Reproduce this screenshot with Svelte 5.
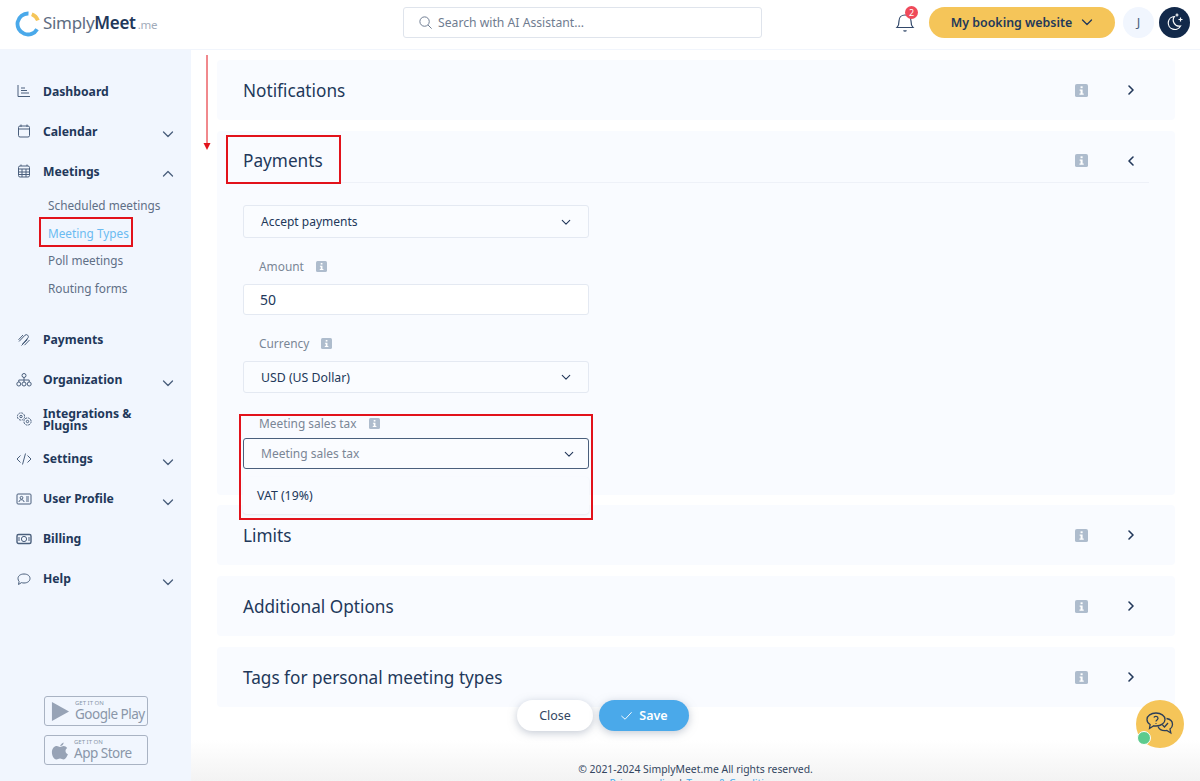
<script>
	const menuTop = [
		{ name: 'Dashboard', icon: 'dash' },
		{ name: 'Calendar', icon: 'cal', arrow: 'down' },
		{ name: 'Meetings', icon: 'grid', arrow: 'up' }
	]
	const subItems = ['Scheduled meetings', 'Meeting Types', 'Poll meetings', 'Routing forms']
	const menuBottom = [
		{ name: 'Payments', icon: 'pay' },
		{ name: 'Organization', icon: 'org', arrow: 'down' },
		{ name: 'Integrations & Plugins', icon: 'gears', tall: true },
		{ name: 'Settings', icon: 'code', arrow: 'down' },
		{ name: 'User Profile', icon: 'user', arrow: 'down' },
		{ name: 'Billing', icon: 'bill' },
		{ name: 'Help', icon: 'help', arrow: 'down' }
	]
	const lowerPanels = ['Limits', 'Additional Options', 'Tags for personal meeting types']
</script>

{#snippet menuIcon(kind)}
	<svg class="micon" viewBox="0 0 16 16" width="16" height="16" fill="none" stroke="#4a5f7c" stroke-width="1">
		{#if kind === 'dash'}
			<path d="M2 2v11.500h12M5 5h4M5 7.500h6M5 10h8" />
		{:else if kind === 'cal'}
			<rect x="2.500" y="3" width="11" height="11" rx="1.500" /><path d="M5 1.500V4M11 1.500V4M2.500 6h11" />
		{:else if kind === 'grid'}
			<rect x="2.500" y="3" width="11" height="11" rx="1.500" /><path d="M5 1.500V3M11 1.500V3M2.500 6h11M2.500 9h11M2.500 11.500h11M6 6v8M10 6v8" />
		{:else if kind === 'pay'}
			<path d="M3 9.500 9 3.200a2 2 0 0 1 3 2.600L6.500 12M5.500 13.500 11.500 7.500M7 3 2.500 7.800M13.500 8 8.500 13.200" />
		{:else if kind === 'org'}
			<circle cx="8" cy="3.500" r="2" /><circle cx="2.800" cy="12" r="2" /><circle cx="8" cy="12" r="2" /><circle cx="13.200" cy="12" r="2" /><path d="M8 5.500V10M2.800 10V8h10.400v2" />
		{:else if kind === 'gears'}
			<circle cx="5" cy="5.500" r="3.600" stroke-dasharray="2 .8" /><circle cx="5" cy="5.500" r="1.200" /><circle cx="11.500" cy="10.500" r="3.600" stroke-dasharray="2 .8" /><circle cx="11.500" cy="10.500" r="1.200" />
		{:else if kind === 'code'}
			<path d="M4.500 4.500 1 8l3.500 3.500M11.500 4.500 15 8l-3.500 3.500M9.500 2.500l-3 11" />
		{:else if kind === 'user'}
			<rect x="1" y="3" width="14" height="10" rx="1" /><circle cx="5.500" cy="6.800" r="1.400" /><path d="M3 11c0-3 5-3 5 0M10 6h3M10 8h3M10 10h3" />
		{:else if kind === 'bill'}
			<rect x="1" y="3.500" width="14" height="9" rx="1.500" stroke-width="1.400" /><circle cx="8" cy="8" r="2.600" /><path d="M3 6v4M13 6v4" />
		{:else if kind === 'help'}
			<path d="M8 3c3.600 0 6 1.900 6 4.500S11.600 12 8 12c-.9 0-1.700-.1-2.500-.4L2.500 13.500l.6-3C2.400 9.700 2 8.700 2 7.500 2 4.900 4.400 3 8 3z" />
		{/if}
	</svg>
{/snippet}

{#snippet chevron(dir, cls = '')}
	<svg class="chev {cls}" viewBox="0 0 12 12" width="12" height="12" fill="none" stroke="currentColor" stroke-width="1.300" stroke-linecap="round" stroke-linejoin="round">
		{#if dir === 'down'}
			<path d="M1.500 4 6 8.500 10.500 4" />
		{:else if dir === 'up'}
			<path d="M1.500 8 6 3.500 10.500 8" />
		{:else if dir === 'right'}
			<path d="M4 2l4 4-4 4" stroke-width="1.600" />
		{:else}
			<path d="M8 2 4 6l4 4" stroke-width="1.600" />
		{/if}
	</svg>
{/snippet}

{#snippet infoIcon(size = 13)}
	<svg class="info" viewBox="0 0 14 14" width={size} height={size}>
		<rect width="14" height="14" rx="2" fill="#aebccd" />
		<rect x="6" y="2.500" width="2.200" height="2" fill="#fff" />
		<path d="M5 6h3.200v4.200H9.400v1.300H4.800v-1.300H6V7.300H5z" fill="#fff" />
	</svg>
{/snippet}

<div class="page">
	<header class="topbar">
		<div class="logo">
			<svg viewBox="0 0 26 26" width="26" height="26" fill="none" stroke-width="3.800">
				<path d="M22.100 18.200A10.500 10.500 0 1 1 13.500 2.500" stroke="#4aa9ea" />
				<path d="M16.800 3.200a10.500 10.500 0 0 1 6.100 6.200" stroke="#f5c559" />
			</svg>
			<span class="logotext">Simply<b>Meet</b><small>.me</small></span>
		</div>
		<div class="search">
			<svg viewBox="0 0 16 16" width="15" height="15" fill="none" stroke="#66758c" stroke-width="1">
				<circle cx="7" cy="7" r="5" /><path d="M10.700 10.700 14.500 14.500" />
			</svg>
			<span>Search with AI Assistant...</span>
		</div>
		<div class="tools">
			<div class="bell">
				<svg viewBox="0 0 20 22" width="20" height="22" fill="none" stroke="#33496a" stroke-width="1.200">
					<path d="M2 16.500c1.500-1.500 2-3 2-6.500 0-3.500 2.500-6 6-6s6 2.500 6 6c0 3.500.5 5 2 6.500zM8.500 19.500c1 .8 2 .8 3 0" />
				</svg>
				<span class="badge">2</span>
			</div>
			<div class="booking">My booking website {@render chevron('down')}</div>
			<div class="avatar">J</div>
			<div class="moon">
				<svg viewBox="0 0 20 20" width="20" height="20" fill="none" stroke="#fff" stroke-width="1.200">
					<path d="M9.500 4.500a6.500 6.500 0 1 0 6 9.500 6 6 0 0 1-6-9.500z" />
					<path d="M12 1.500v3M10.500 3h3M15.500 5.500v4M13.500 7.500h4" />
				</svg>
			</div>
		</div>
	</header>

	<div class="body">
		<aside class="sidebar">
			<nav>
				{#each menuTop as item}
					<div class="mitem">
						{@render menuIcon(item.icon)}
						<span class="mname">{item.name}</span>
						{#if item.arrow}{@render chevron(item.arrow, 'marrow')}{/if}
					</div>
				{/each}
				<div class="sub">
					{#each subItems as s, i}
						<div class="subitem" class:active={i === 1}>{s}</div>
					{/each}
				</div>
				{#each menuBottom as item}
					<div class="mitem" class:tall={item.tall}>
						{@render menuIcon(item.icon)}
						<span class="mname">{item.name}</span>
						{#if item.arrow}{@render chevron(item.arrow, 'marrow')}{/if}
					</div>
				{/each}
			</nav>
			<div class="stores">
				<div class="store">
					<svg viewBox="0 0 20 22" width="19" height="21"><path d="M1 1l18 10L1 21z" fill="#97a3b6" /></svg>
					<div><small>GET IT ON</small><span>Google Play</span></div>
				</div>
				<div class="store">
					<svg viewBox="0 0 20 22" width="18" height="21"><path d="M10 6c1-2 2.500-3.500 4-4 .2 2-1.500 4-4 4zM10 7c1.500 0 2.500-1 4-1 1.500 0 3 .8 4 2.300-2.800 1.700-2.300 5.700.8 7-1 2.700-2.800 5.700-4.800 5.700-1.500 0-2.300-1-4-1s-2.500 1-4 1C3 21 1 16.500 1 13c0-4 2.500-7 5.500-7 1.300 0 2.300 1 3.500 1z" fill="#97a3b6" /></svg>
					<div><small>GET IT ON</small><span>App Store</span></div>
				</div>
			</div>
		</aside>

		<main class="content">
			<div class="panels">
				<section class="panel">
					<h2>Notifications</h2>
					{@render infoIcon()}
					{@render chevron('right', 'pchev')}
				</section>

				<section class="panel open">
					<div class="phead">
						<h2>Payments</h2>
						{@render infoIcon()}
						{@render chevron('left', 'pchev')}
					</div>
					<div class="form">
						<div class="field first">Accept payments {@render chevron('down')}</div>
						<div class="label">Amount {@render infoIcon(11)}</div>
						<div class="field input">50</div>
						<div class="label">Currency {@render infoIcon(11)}</div>
						<div class="field value">USD (US Dollar) {@render chevron('down')}</div>
						<div class="label tight">Meeting sales tax {@render infoIcon(11)}</div>
						<div class="field focus">Meeting sales tax {@render chevron('down')}</div>
						<div class="option">VAT (19%)</div>
					</div>
				</section>

				{#each lowerPanels as p}
					<section class="panel">
						<h2>{p}</h2>
						{@render infoIcon()}
						{@render chevron('right', 'pchev')}
					</section>
				{/each}
			</div>

			<footer class="foot">
				<div>© 2021-2024 SimplyMeet.me All rights reserved.</div>
				<div class="links"><span>Privacy policy</span> | <span>Terms &amp; Conditions</span></div>
			</footer>

			<div class="actions">
				<button class="close">Close</button>
				<button class="save">
					<svg viewBox="0 0 14 14" width="13" height="13" fill="none" stroke="#fff" stroke-width="1"><path d="M1.500 7.500 5.500 11 12.500 3.500" /></svg>
					Save
				</button>
			</div>

			<div class="chat">
				<svg viewBox="0 0 30 26" width="30" height="26" fill="none" stroke="#2c3e58" stroke-width="1.300">
					<path d="M11 2c5 0 9 2.800 9 6.500S16 15 11 15c-.8 0-1.500 0-2.200-.2L4.500 17.500l.6-4C3 12.300 2 10.500 2 8.500 2 4.800 6 2 11 2z" />
					<path d="M21.500 7.500c3.500.5 6 2.800 6 6 0 2-1 3.500-2.500 4.600l.8 3.900-4-2.500c-3.800.6-7.500-1-8.800-4" />
					<path d="M9 6.500c.3-1.500 4-1.500 4 .8 0 1.700-2 1.500-2 3.200M11 12v.8M17.500 14l2 2 3.500-4" />
				</svg>
				<span class="dot"></span>
			</div>
		</main>
	</div>

	<!-- red annotations drawn over the page -->
	<div class="mark m-types"></div>
	<div class="mark m-pay"></div>
	<div class="mark m-tax"></div>
	<svg class="arrow" viewBox="0 0 10 100" width="10" height="100">
		<path d="M5 0V90" stroke="#e2121b" stroke-width="1" />
		<path d="M1.500 88h7L5 95z" fill="#e2121b" />
	</svg>
</div>

<style>
	:global(body) {
		font-family: "Noto Sans", "Open Sans", sans-serif;
		color: #22385a;
		background: #fff;
	}

	.page {
		position: relative;
		width: 1200px;
		height: 781px;
		overflow: hidden;
		display: flex;
		flex-direction: column;
	}

	.topbar {
		height: 50px;
		flex: none;
		display: flex;
		align-items: center;
		box-sizing: border-box;
		padding: 0 10px 5px 15px;
		background: #fff;
		border-bottom: 1px solid #f1f5fc;
	}

	.logo {
		width: 388px;
		display: flex;
		align-items: center;
		gap: 2px;
		padding-top: 3px;
		box-sizing: border-box;
	}

	.logotext {
		font-size: 17px;
		letter-spacing: -0.3px;
		color: #5e6d82;
		margin-top: -2px;
	}

	.logotext b {
		font-weight: 600;
		color: #22385a;
	}

	.logotext small {
		font-size: 11.500px;
		color: #a2acba;
		margin-left: 2px;
	}

	.search {
		width: 359px;
		height: 31px;
		box-sizing: border-box;
		border: 1px solid #dfe4ec;
		border-radius: 3px;
		display: flex;
		align-items: center;
		gap: 5px;
		padding-left: 14px;
		font-size: 12.200px;
		color: #6f7c90;
	}

	.tools {
		margin-left: auto;
		display: flex;
		align-items: center;
	}

	.bell {
		position: relative;
		width: 20px;
		height: 22px;
		margin-right: 14px;
	}

	.badge {
		position: absolute;
		top: -5px;
		left: 10px;
		width: 13px;
		height: 13px;
		border-radius: 50%;
		background: #ef4a5a;
		color: #fff;
		font-size: 9px;
		line-height: 13px;
		text-align: center;
	}

	.booking {
		width: 186px;
		height: 31px;
		box-sizing: border-box;
		border-radius: 16px;
		background: #f5c559;
		font-size: 12.400px;
		font-weight: 600;
		color: #22385a;
		display: flex;
		align-items: center;
		justify-content: center;
		gap: 9px;
	}

	.avatar {
		width: 31px;
		height: 31px;
		border-radius: 50%;
		background: #f1f6fe;
		margin-left: 8px;
		text-align: center;
		line-height: 31px;
		font-size: 13px;
		color: #4a5f7c;
	}

	.moon {
		width: 31px;
		height: 31px;
		border-radius: 50%;
		background: #12294a;
		margin-left: 5px;
		display: flex;
		align-items: center;
		justify-content: center;
	}

	.body {
		flex: 1;
		display: flex;
		min-height: 0;
	}

	.sidebar {
		width: 191px;
		flex: none;
		background: #f1f6fe;
		display: flex;
		flex-direction: column;
		padding-top: 21px;
		box-sizing: border-box;
	}

	.mitem {
		height: 40px;
		display: flex;
		align-items: center;
		padding-left: 16px;
		position: relative;
	}

	.mitem.tall {
		height: 39px;
	}

	.micon {
		flex: none;
		margin-right: 11px;
	}

	.mname {
		font-size: 12.200px;
		font-weight: 700;
		line-height: 12px;
		color: #22385a;
		width: 100px;
		padding-top: 1px;
	}

	.mitem:not(.tall) .mname {
		white-space: nowrap;
	}

	:global(.marrow) {
		position: absolute;
		left: 162px;
		top: 17px;
		color: #4a5f7c;
	}

	.sub {
		padding: 1px 0 17px 48px;
	}

	.subitem {
		height: 27.700px;
		line-height: 27.700px;
		font-size: 11.800px;
		color: #5f6f86;
	}

	.subitem.active {
		color: #6bbbf1;
	}

	.stores {
		margin-top: auto;
		padding: 0 0 16px 44px;
		display: flex;
		flex-direction: column;
		gap: 9px;
	}

	.store {
		width: 104px;
		height: 30px;
		box-sizing: border-box;
		border: 1px solid #a9b3c3;
		border-radius: 3px;
		display: flex;
		align-items: center;
		gap: 5px;
		padding-left: 6px;
		color: #8a96a9;
	}

	.store div {
		display: flex;
		flex-direction: column;
		line-height: 1;
		white-space: nowrap;
	}

	.store small {
		font-size: 6px;
		margin-bottom: 1px;
	}

	.store span {
		font-size: 13.500px;
		letter-spacing: -0.500px;
		line-height: 15px;
	}

	.content {
		flex: 1;
		min-width: 0;
		position: relative;
		display: flex;
		flex-direction: column;
		padding: 10px 25px 0 26px;
		box-sizing: border-box;
		background: linear-gradient(#fff 690px, #f3f3f3 731px);
	}

	.panels {
		display: flex;
		flex-direction: column;
		gap: 11px;
	}

	.panel {
		height: 60px;
		box-sizing: border-box;
		background: #f9fbff;
		border-radius: 4px;
		display: flex;
		align-items: center;
		padding: 0 38px 0 26px;
	}

	.panel h2 {
		margin: 0 auto 0 0;
		font-size: 17.200px;
		font-weight: 400;
		color: #22385a;
	}

	:global(.pchev) {
		margin-left: 37px;
		color: #22385a;
	}

	.panel.open {
		height: 364px;
		display: block;
		padding: 0 26px;
		margin-bottom: -1px;
	}

	.phead {
		height: 52px;
		box-sizing: border-box;
		border-bottom: 1px solid #eef1f8;
		display: flex;
		align-items: center;
		padding: 8px 12px 0 0;
	}

	.form {
		position: relative;
		width: 346px;
	}

	.field {
		height: 33px;
		box-sizing: border-box;
		background: #fafcff;
		border: 1px solid #e4e9f2;
		border-radius: 3px;
		display: flex;
		align-items: center;
		justify-content: space-between;
		padding: 0 17px;
		font-size: 12px;
		color: #22385a;
	}

	.field :global(.chev) {
		width: 10px;
		height: 10px;
		color: #22385a;
	}

	.field.first {
		margin-top: 22px;
	}

	.field.input {
		background: #fff;
		font-size: 14px;
		height: 31px;
		padding-left: 16px;
		padding-bottom: 1px;
	}

	.field.value {
		font-size: 12.300px;
		height: 32px;
	}

	.field.focus {
		height: 31px;
		border-color: #4a5f7c;
		color: #7a8696;
		padding-right: 14px;
	}

	.label {
		display: flex;
		align-items: center;
		gap: 12px;
		height: 18px;
		margin: 19px 0 9px 16px;
		font-size: 11.900px;
		color: #7a8696;
	}

	.label.tight {
		margin: 21px 0 6px 16px;
	}

	.option {
		position: absolute;
		left: 0;
		top: 272px;
		width: 346px;
		height: 37px;
		box-sizing: border-box;
		background: #f9fbff;
		border-radius: 4px;
		box-shadow: 0 1px 2px #e6e9f0;
		padding-left: 14px;
		line-height: 37px;
		font-size: 12.300px;
		color: #22385a;
		z-index: 2;
	}

	.foot {
		position: absolute;
		left: 0;
		right: 0;
		top: 712px;
		text-align: center;
		font-size: 10.400px;
		line-height: 14px;
		color: #33465f;
	}

	.links span {
		color: #4aa9ea;
	}

	.actions {
		position: absolute;
		left: 326px;
		top: 650px;
		display: flex;
		gap: 6px;
	}

	.actions button {
		height: 31px;
		border: none;
		border-radius: 16px;
		font-family: inherit;
		font-size: 12.500px;
		box-shadow: 0 2px 8px #8a96a980;
	}

	.close {
		width: 76px;
		background: #fff;
		color: #33465f;
	}

	.save {
		width: 90px;
		background: #4aa9ea;
		color: #fff;
		font-weight: 600;
		display: flex;
		align-items: center;
		justify-content: center;
		gap: 6px;
	}

	.chat {
		position: absolute;
		left: 945px;
		top: 650px;
		width: 48px;
		height: 48px;
		border-radius: 50%;
		background: #f5c559;
		display: flex;
		align-items: center;
		justify-content: center;
	}

	.dot {
		position: absolute;
		left: 1px;
		top: 31px;
		width: 12px;
		height: 12px;
		border-radius: 50%;
		background: #5ccb8e;
		border: 1.500px solid #fff;
	}

	.mark {
		position: absolute;
		box-sizing: border-box;
		border: 2px solid #e2121b;
		z-index: 5;
	}

	.m-types {
		left: 39px;
		top: 217px;
		width: 94px;
		height: 30px;
	}

	.m-pay {
		left: 226px;
		top: 135px;
		width: 115px;
		height: 49px;
	}

	.m-tax {
		left: 239px;
		top: 414px;
		width: 354px;
		height: 106px;
	}

	.arrow {
		position: absolute;
		left: 202px;
		top: 55px;
		z-index: 5;
	}
</style>
